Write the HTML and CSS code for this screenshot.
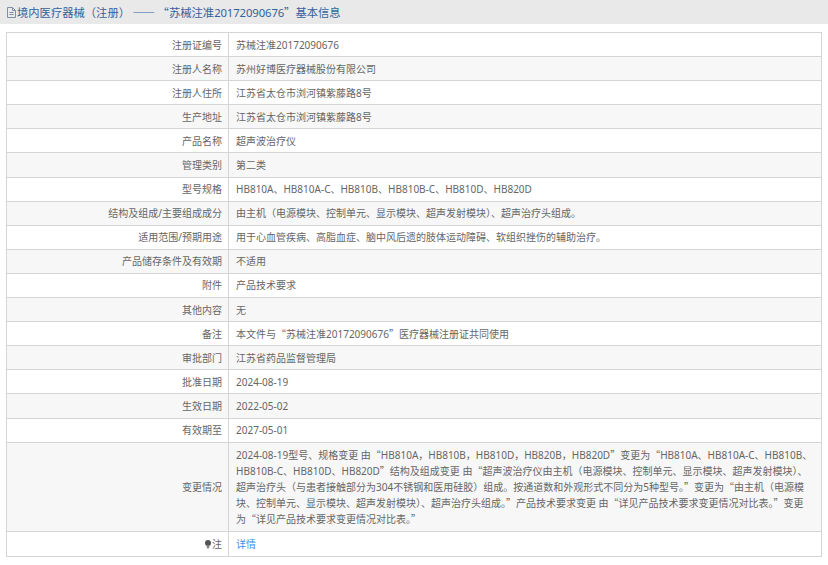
FILE: index.html
```html
<!DOCTYPE html>
<html lang="zh-CN">
<head>
    <meta charset="UTF-8">
    <title>境内医疗器械（注册）基本信息</title>
    <link rel="stylesheet" href="styles.css">
</head>
<body>
    <div class="title-bar">
        <svg class="doc-icon" width="9" height="11" viewBox="0 0 9 11" fill="none" stroke="#7d8ea6" stroke-width="1">
            <path d="M.5 .5h5l3 3v7h-8z"/>
            <path d="M5.5 .5v3h3M2.5 5.5h4M2.5 7.5h4"/>
        </svg>
        <span class="cjk">境内医疗器械（注册） —— “苏械注准<span class="latin">20172090676</span>”基本信息</span>
    </div>
    <table class="info-table">
        <tr><th>注册证编号</th><td>苏械注准20172090676</td></tr>
        <tr><th>注册人名称</th><td>苏州好博医疗器械股份有限公司</td></tr>
        <tr><th>注册人住所</th><td>江苏省太仓市浏河镇紫藤路8号</td></tr>
        <tr><th>生产地址</th><td>江苏省太仓市浏河镇紫藤路8号</td></tr>
        <tr><th>产品名称</th><td>超声波治疗仪</td></tr>
        <tr><th>管理类别</th><td>第二类</td></tr>
        <tr><th>型号规格</th><td>HB810A、HB810A-C、HB810B、HB810B-C、HB810D、HB820D</td></tr>
        <tr><th>结构及组成/主要组成成分</th><td>由主机（电源模块、控制单元、显示模块、超声发射模块）、超声治疗头组成。</td></tr>
        <tr><th>适用范围/预期用途</th><td>用于心血管疾病、高脂血症、脑中风后遗的肢体运动障碍、软组织挫伤的辅助治疗。</td></tr>
        <tr><th>产品储存条件及有效期</th><td>不适用</td></tr>
        <tr><th>附件</th><td>产品技术要求</td></tr>
        <tr><th>其他内容</th><td>无</td></tr>
        <tr><th>备注</th><td>本文件与<span class="cjk">“</span>苏械注准20172090676<span class="cjk">”</span>医疗器械注册证共同使用</td></tr>
        <tr><th>审批部门</th><td>江苏省药品监督管理局</td></tr>
        <tr><th>批准日期</th><td>2024-08-19</td></tr>
        <tr><th>生效日期</th><td>2022-05-02</td></tr>
        <tr><th>有效期至</th><td>2027-05-01</td></tr>
        <tr class="change-row">
            <th>变更情况</th>
            <td>2024-08-19型号、规格变更 由<span class="cjk">“</span>HB810A，HB810B，HB810D，HB820B，HB820D<span class="cjk">”</span>变更为<span class="cjk">“</span>HB810A、HB810A-C、HB810B、<br>HB810B-C、HB810D、HB820D<span class="cjk">”</span>结构及组成变更 由<span class="cjk">“</span>超声波治疗仪由主机（电源模块、控制单元、显示模块、超声发射模块）、<br>超声治疗头（与患者接触部分为304不锈钢和医用硅胶）组成。按通道数和外观形式不同分为5种型号。<span class="cjk">”</span>变更为<span class="cjk">“</span>由主机（电源模<br>块、控制单元、显示模块、超声发射模块）、超声治疗头组成。<span class="cjk">”</span>产品技术要求变更 由<span class="cjk">“</span>详见产品技术要求变更情况对比表。<span class="cjk">”</span>变更<br>为<span class="cjk">“</span>详见产品技术要求变更情况对比表。<span class="cjk">”</span></td>
        </tr>
        <tr class="note-row">
            <th>
                <svg class="bulb" width="6" height="9" viewBox="0 0 6 9">
                    <circle cx="3" cy="3" r="3" fill="#555"/>
                    <path d="M1.5 5.5h3L4 8.5H2z" fill="#888"/>
                </svg>注
            </th>
            <td><a href="#">详情</a></td>
        </tr>
    </table>
</body>
</html>
```

FILE: styles.css
```css
body {
    margin: 0;
    background-color: #fff;
    font-family: "Noto Sans", "Noto Sans CJK SC", sans-serif;
    font-size: 10px;
    color: #666;
}
.cjk {
    font-family: "Noto Sans CJK SC", sans-serif;
}
.latin {
    font-family: "Noto Sans", sans-serif;
    letter-spacing: -.1px;
}
.title-bar {
    display: flex;
    align-items: center;
    gap: 1px;
    height: 24px;
    padding-left: 7px;
    background-color: #e9e9e9;
    color: #33629c;
    font-size: 11.3px;
}
.info-table {
    width: 816px;
    margin: 8px 0 0 6px;
    border-collapse: collapse;
    border: 1px solid #d5d5d5;
    table-layout: fixed;
}
.info-table tr:nth-child(even) {
    background-color: #f7f7f7;
}
.info-table th,
.info-table td {
    padding: 3.55px 7px;
    border: 1px solid #d5d5d5;
    line-height: 16px;
    font-weight: normal;
}
.info-table th {
    width: 208px;
    padding-right: 6px;
    text-align: right;
}
.info-table td {
    padding-right: 2px;
}
.change-row td {
    padding-top: 4.5px;
    white-space: nowrap;
}
.note-row td,
.note-row th {
    padding-top: 4px;
    padding-bottom: 4px;
}
.info-table a {
    color: #3d8fe8;
    text-decoration: none;
}
.bulb {
    margin-right: 1px;
    vertical-align: -1px;
}
```
